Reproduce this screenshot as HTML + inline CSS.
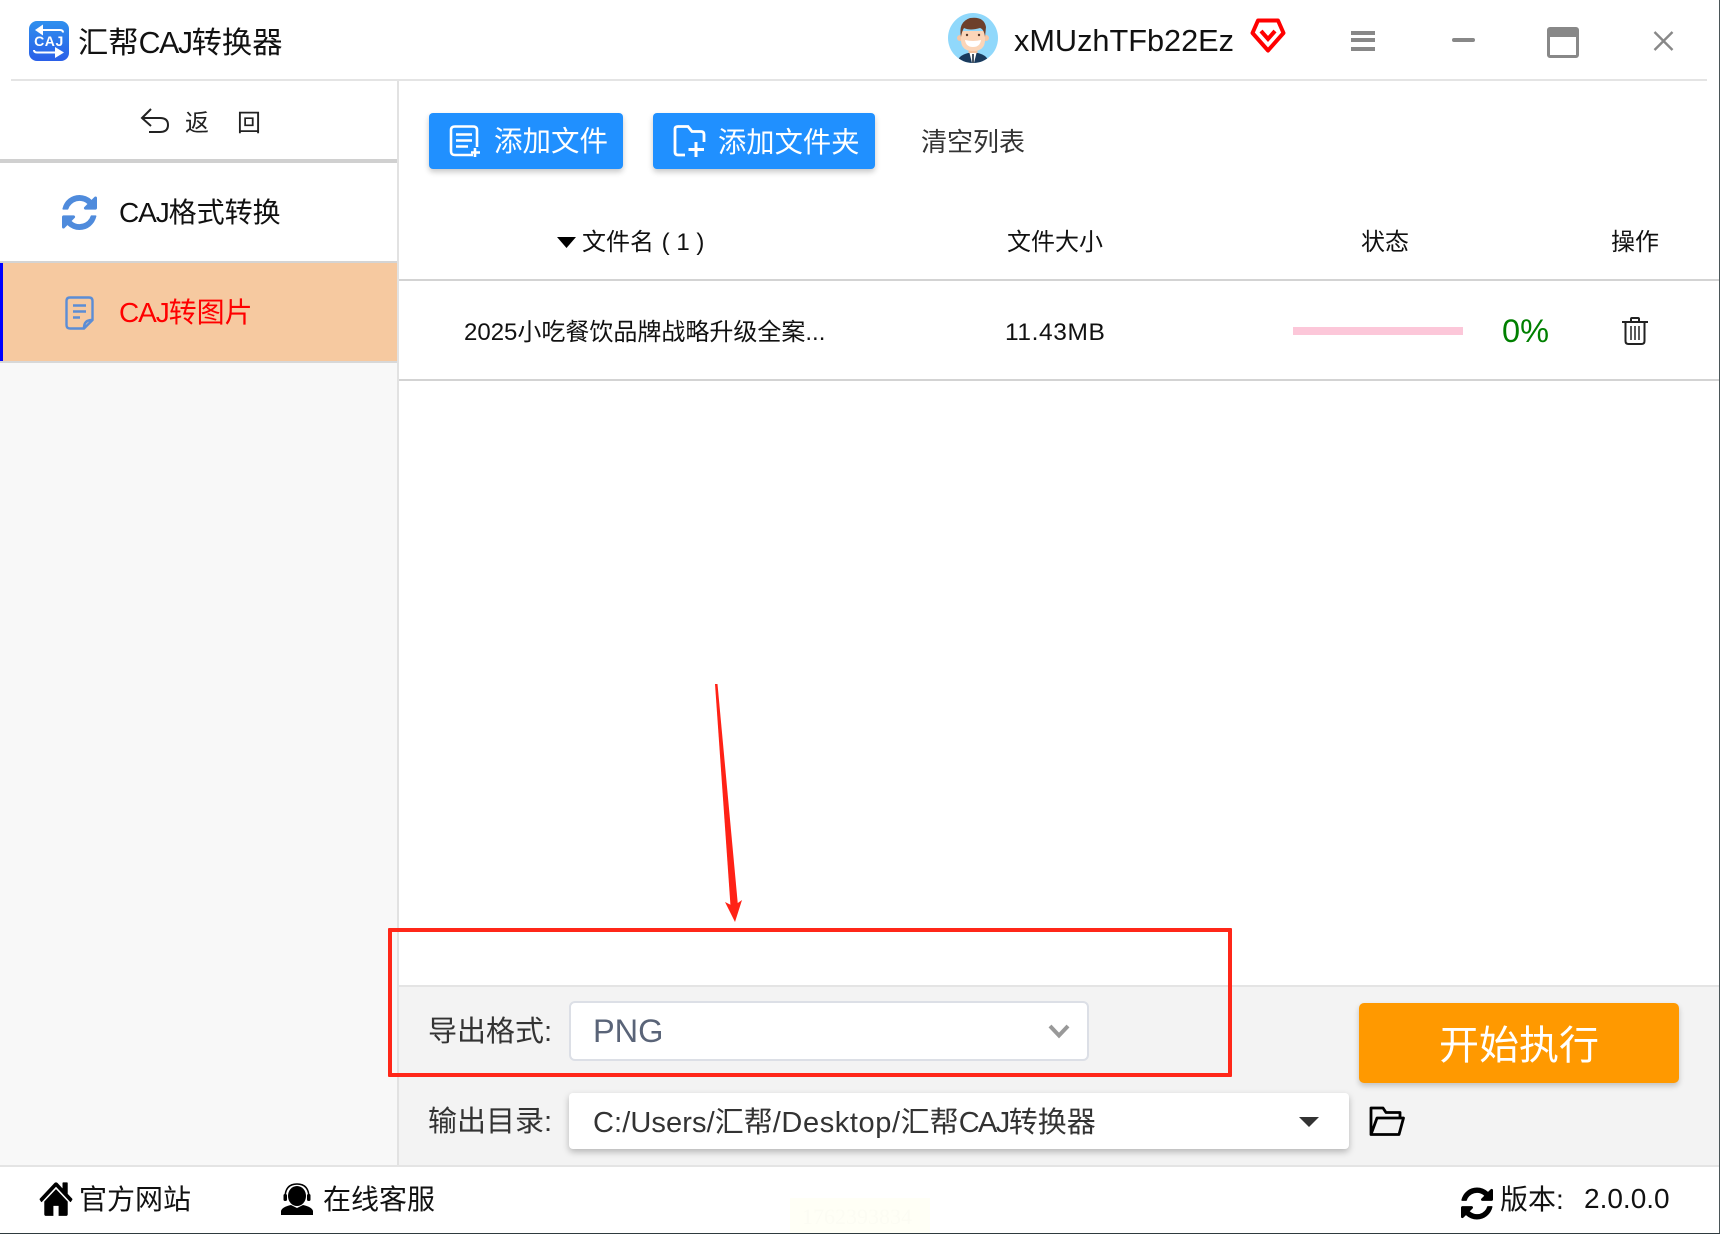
<!DOCTYPE html>
<html lang="zh-CN"><head><meta charset="utf-8"><title>汇帮CAJ转换器</title>
<style>
html,body{margin:0;padding:0;background:#fff}
#app{position:relative;width:1720px;height:1234px;overflow:hidden;background:#fff;font-family:"Liberation Sans","Noto Sans CJK SC",sans-serif;color:#111}
.b{position:absolute}
.t{position:absolute;white-space:nowrap;line-height:40px;height:40px}
svg{position:absolute;overflow:visible}
.n{letter-spacing:-1.1px}
</style></head><body><div id="app">

<!-- backgrounds -->
<div class="b" style="left:0;top:363px;width:397px;height:802px;background:#f8f8f8"></div>
<div class="b" style="left:399px;top:987px;width:1321px;height:178px;background:#f3f3f3"></div>
<div class="b" style="left:11px;top:79px;width:1696px;height:2px;background:#e4e4e4"></div>
<div class="b" style="left:397px;top:81px;width:2px;height:1084px;background:#e2e2e2"></div>
<div class="b" style="left:399px;top:985px;width:1321px;height:2px;background:#e4e4e4"></div>
<div class="b" style="left:0;top:1165px;width:1720px;height:2px;background:#e4e4e4"></div>
<div class="b" style="left:0;top:159px;width:397px;height:4px;background:#d0d0d0"></div>
<div class="b" style="left:0;top:261px;width:397px;height:2px;background:#d4d4d4"></div>
<div class="b" style="left:0;top:263px;width:397px;height:98px;background:#f6c9a0"></div>
<div class="b" style="left:0;top:263px;width:3px;height:98px;background:#0000ff"></div>
<div class="b" style="left:0;top:361px;width:397px;height:2px;background:#d8d8d8"></div>
<div class="b" style="left:399px;top:279px;width:1321px;height:2px;background:#d3d3d3"></div>
<div class="b" style="left:399px;top:379px;width:1321px;height:2px;background:#d3d3d3"></div>

<!-- title bar -->
<svg style="left:29px;top:21px" width="40" height="40" viewBox="0 0 40 40">
<defs><linearGradient id="lg" x1="0" y1="0" x2="0" y2="1"><stop offset="0" stop-color="#2f90ee"/><stop offset="1" stop-color="#2a5fe8"/></linearGradient></defs>
<rect width="40" height="40" rx="8" fill="url(#lg)"/>
<path d="M34 11.500 Q34 9 31 9 H13" fill="none" stroke="#fff" stroke-width="2"/><path d="M14 3.500 L6 9 L14 14.500Z" fill="#fff"/>
<path d="M5 29 Q5 31.500 8 31.500 H26" fill="none" stroke="#fff" stroke-width="2"/><path d="M26 26 L35 31.500 L26 37Z" fill="#fff"/>
<text x="20" y="25" text-anchor="middle" font-family="Liberation Sans" font-weight="700" font-size="14" fill="#fff" letter-spacing=".6">CAJ</text>
</svg>
<div class="t" style="left:78px;top:24px;font-size:30.300px">汇帮<span style="letter-spacing:-1.400px">CAJ</span>转换器</div>

<svg style="left:948px;top:13px" width="50" height="50" viewBox="0 0 50 50">
<defs><clipPath id="av"><circle cx="25" cy="25" r="25"/></clipPath></defs>
<g clip-path="url(#av)"><rect width="50" height="50" fill="#90d8fb"/>
<path d="M9 50 Q10 41 25 39 Q40 41 41 50Z" fill="#1a3a5c"/>
<path d="M21 38 H29 L26 50 H24Z" fill="#fff"/><path d="M24.200 41 H25.800 V50 H24.200Z" fill="#1a2a3c"/>
<rect x="20.500" y="31" width="9" height="9" fill="#f2c09c"/>
<circle cx="12" cy="25" r="3" fill="#f5c6a5"/><circle cx="38" cy="25" r="3" fill="#f5c6a5"/>
<path d="M13 18 H37 V27 Q37 38 25 38 Q13 38 13 27Z" fill="#fbd5b8"/>
<path d="M13 24 Q10 9 22 5 Q36 3 38 14 L37 24 Q36 16 32 15 Q22 18 16 15 Q14 18 13 24Z" fill="#6d3f2b"/>
<path d="M17 27 Q25 29 33 27 Q32 34 25 34 Q18 34 17 27Z" fill="#fff"/>
<circle cx="19" cy="22" r="1.200" fill="#5a3a2a"/><circle cx="31" cy="22" r="1.200" fill="#5a3a2a"/>
</g></svg>
<div class="t" style="left:1014px;top:21px;font-size:30.700px">xMUzhTFb22Ez</div>
<svg style="left:1250px;top:18px" width="36" height="36" viewBox="0 0 36 36">
<path d="M8 2.500 H28 L33.500 15 L18 32.500 L2.500 15Z" fill="none" stroke="#f00" stroke-width="4" stroke-linejoin="round"/>
<path d="M11 13 L18 21 L25 13" fill="none" stroke="#f00" stroke-width="4"/>
</svg>
<div class="b" style="left:1351px;top:31px;width:24px;height:4px;background:#888"></div>
<div class="b" style="left:1351px;top:38px;width:24px;height:4px;background:#888"></div>
<div class="b" style="left:1351px;top:47px;width:24px;height:4px;background:#888"></div>
<div class="b" style="left:1452px;top:38px;width:23px;height:4px;border-radius:2px;background:#888"></div>
<div class="b" style="left:1547px;top:27px;width:26px;height:18px;border:3px solid #888;border-top:10px solid #888;border-radius:3px"></div>
<svg style="left:1653px;top:31px" width="21" height="20" viewBox="0 0 21 20"><path d="M1.500 1 L19.500 19 M19.500 1 L1.500 19" stroke="#888" stroke-width="2.400" fill="none"/></svg>
<div class="b" style="left:1719px;top:0;width:1px;height:1234px;background:#4a5558"></div>

<!-- sidebar -->
<svg style="left:140px;top:108px" width="29" height="26" viewBox="0 0 29 26"><path d="M11 1 L2 10 L11 18" fill="none" stroke="#222" stroke-width="2"/><path d="M2 10 H20 Q28 10 28 17 Q28 24 20 24 H9" fill="none" stroke="#222" stroke-width="2"/></svg>
<div class="t" style="left:185px;top:104px;font-size:24px;color:#222">返</div>
<div class="t" style="left:237px;top:104px;font-size:24px;color:#222">回</div>

<svg style="left:62px;top:195px" width="35" height="35" viewBox="0 0 1536 1536"><path fill="#4f8bdc" d="M1511 928q0 5-1 7-64 268-268 434.500T764 1536q-146 0-282.500-55T238 1324l-129 129q-19 19-45 19t-45-19-19-45V960q0-26 19-45t45-19h448q26 0 45 19t19 45-19 45l-137 137q71 66 161 102t187 36q134 0 250-65t186-179q11-17 53-117 8-23 30-23h192q13 0 22.500 9.500t9.500 22.500zm25-800v448q0 26-19 45t-45 19h-448q-26 0-45-19t-19-45 19-45l138-138Q969 256 768 256q-134 0-250 65T332 500q-11 17-53 117-8 23-30 23H50q-13 0-22.500-9.500T18 608v-7q65-268 270-434.500T768 0q146 0 284 55.500T1297 212l130-129q19-19 45-19t45 19 19 45z"/></svg>
<div class="t" style="left:119px;top:193px;font-size:28px"><span class="n">CAJ</span>格式转换</div>

<svg style="left:65px;top:296px" width="29" height="34" viewBox="0 0 29 34"><path d="M5 1.500 H24 Q27.500 1.500 27.500 5 V24 L19 32.500 H5 Q1.500 32.500 1.500 29 V5 Q1.500 1.500 5 1.500Z" fill="none" stroke="#5b8dd6" stroke-width="2.400"/><path d="M19 32 Q19 24 27 24" fill="none" stroke="#5b8dd6" stroke-width="2.400"/><path d="M8 9.500 H21 M8 15.500 H21 M8 21.500 H15" stroke="#5b8dd6" stroke-width="2.400"/></svg>
<div class="t" style="left:119px;top:293px;font-size:28px;color:#f00"><span class="n">CAJ</span>转图片</div>

<!-- toolbar -->
<div class="b" style="left:429px;top:113px;width:194px;height:56px;background:#2090ff;border-radius:4px;box-shadow:0 3px 6px rgba(0,0,0,.22)"></div>
<svg style="left:449px;top:125px" width="32" height="33" viewBox="0 0 32 33"><path d="M24 30 H6 Q2 30 2 26 V5 Q2 1.500 6 1.500 H24 Q28 1.500 28 5 V22" fill="none" stroke="#fff" stroke-width="2.600"/><path d="M7 9.500 H23 M7 15.500 H23 M7 21.500 H19" stroke="#fff" stroke-width="2.600"/><path d="M26 23 V32 M22 27.500 H31" stroke="#fff" stroke-width="2.600"/></svg>
<div class="t" style="left:494px;top:122px;font-size:28.500px;color:#fff">添加文件</div>

<div class="b" style="left:653px;top:113px;width:222px;height:56px;background:#2090ff;border-radius:4px;box-shadow:0 3px 6px rgba(0,0,0,.22)"></div>
<svg style="left:673px;top:125px" width="33" height="33" viewBox="0 0 33 33"><path d="M12 30 H5 Q2 30 2 27 V4 Q2 1.500 5 1.500 H15 L19 6.500 H28 Q31 6.500 31 9.500 V17" fill="none" stroke="#fff" stroke-width="2.800"/><path d="M23 17 V32 M15.500 24.500 H31" stroke="#fff" stroke-width="3"/></svg>
<div class="t" style="left:718px;top:122px;font-size:28.300px;color:#fff">添加文件夹</div>
<div class="t" style="left:921px;top:122px;font-size:26px;color:#333">清空列表</div>

<!-- table -->
<svg style="left:557px;top:237px" width="19" height="11" viewBox="0 0 19 11"><path d="M0 0 H19 L9.500 11Z" fill="#000"/></svg>
<div class="t" style="left:582px;top:222.500px;font-size:24px">文件名 <span style="margin-left:1px">(</span> 1 )</div>
<div class="t" style="left:1007px;top:222.500px;font-size:24px">文件大小</div>
<div class="t" style="left:1361px;top:222.500px;font-size:24px">状态</div>
<div class="t" style="left:1611px;top:222.500px;font-size:24px">操作</div>
<div class="t" style="left:464px;top:313px;font-size:24px">2025小吃餐饮品牌战略升级全案...</div>
<div class="t" style="left:1005px;top:313px;font-size:24.500px;letter-spacing:.6px">11.43MB</div>
<div class="b" style="left:1293px;top:327px;width:170px;height:8px;background:#fcc7d9"></div>
<div class="t" style="left:1502px;top:311px;font-size:32.500px;color:#008000">0%</div>
<svg style="left:1621px;top:317px" width="28" height="28" viewBox="0 0 28 28"><path d="M1 5 H27 M10 5 V2 Q10 1 11 1 H17 Q18 1 18 2 V5" fill="none" stroke="#222" stroke-width="2"/><path d="M4.500 5 V24 Q4.500 27 7.500 27 H20.500 Q23.500 27 23.500 24 V5" fill="none" stroke="#222" stroke-width="2"/><path d="M10 9 V23 M14 9 V23 M18 9 V23" stroke="#222" stroke-width="1.500"/></svg>

<!-- arrow -->
<svg style="left:700px;top:670px" width="60" height="260" viewBox="0 0 60 260">
<path d="M15 14 L17.500 14 L38 236 L30.500 236Z" fill="#ff2216"/>
<path d="M25 232 L35 252 L42 230 L35 235 L31 235Z" fill="#ff2216"/>
</svg>

<!-- format -->
<div class="t" style="left:428px;top:1012px;font-size:29px;color:#333">导出格式:</div>
<div class="b" style="left:569px;top:1001px;width:516px;height:56px;background:#fff;border:2px solid #dcdfe6;border-radius:6px"></div>
<div class="t" style="left:593px;top:1011px;font-size:32.500px;color:#5a6478">PNG</div>
<svg style="left:1048px;top:1024px" width="22" height="14" viewBox="0 0 22 14"><path d="M2 2 L11 11.500 L20 2" fill="none" stroke="#999" stroke-width="4"/></svg>

<!-- dir -->
<div class="t" style="left:428px;top:1102px;font-size:29px;color:#333">输出目录:</div>
<div class="b" style="left:569px;top:1093px;width:780px;height:56px;background:#fff;border-radius:4px;box-shadow:0 3px 7px rgba(0,0,0,.25)"></div>
<div class="t" style="left:593px;top:1103px;font-size:29px;color:#333"><span style="letter-spacing:.1px">C:/Users/</span>汇帮<span style="letter-spacing:.6px">/Desktop/</span>汇帮<span style="letter-spacing:-1.600px">CAJ</span>转换器</div>
<svg style="left:1299px;top:1117px" width="20" height="10" viewBox="0 0 20 10"><path d="M0 0 H20 L10 10Z" fill="#333"/></svg>
<svg style="left:1369px;top:1106px" width="36" height="30" viewBox="0 0 36 30"><path d="M2 28.500 V2 H14 L17 6.500 H31 V12 M2 28.500 H30 L34.500 12 H8 L2 28.500Z" fill="none" stroke="#000" stroke-width="2.800" stroke-linejoin="round"/></svg>

<!-- start -->
<div class="b" style="left:1359px;top:1003px;width:320px;height:80px;background:#ff9900;border-radius:5px;box-shadow:0 3px 6px rgba(0,0,0,.2)"></div>
<div class="t" style="left:1439px;top:1026px;font-size:40px;color:#fff">开始执行</div>

<!-- footer -->
<svg style="left:39px;top:1182px" width="34" height="34" viewBox="60 240 1672 1300" preserveAspectRatio="none"><path fill="#000" d="M1472 992v480q0 26-19 45t-45 19h-384v-384H768v384H384q-26 0-45-19t-19-45V992q0-1 .5-3t.5-3l575-474 575 474q1 2 1 6zm223-69l-62 74q-8 9-21 11h-3q-13 0-21-7L896 424l-692 577q-12 8-24 7-13-2-21-11l-62-74q-8-10-7-23.500T101 878l719-599q32-26 76-26t76 26l244 204V288q0-14 9-23t23-9h192q14 0 23 9t9 23v408l219 182q10 8 11 21.500t-7 23.500z"/></svg>
<div class="t" style="left:79px;top:1180px;font-size:28px">官方网站</div>
<svg style="left:281px;top:1183px" width="32" height="32" viewBox="0 0 32 32"><path d="M4 15 Q4 1 16 1 Q28 1 28 15" fill="none" stroke="#000" stroke-width="1.500"/><rect x="2.500" y="11" width="3.500" height="7" rx="1.500" fill="#000"/><rect x="26" y="11" width="3.500" height="7" rx="1.500" fill="#000"/><ellipse cx="16" cy="13" rx="9" ry="10" fill="#000"/><path d="M0 32 V28 Q1 24 10 22 L16 25 L22 22 Q31 24 32 28 V32Z" fill="#000"/></svg>
<div class="t" style="left:323px;top:1180px;font-size:28px">在线客服</div>
<div class="b" style="left:790px;top:1198px;width:140px;height:35px;background:#fffff6"></div>
<div class="t" style="left:802px;top:1197px;font-size:22px;font-family:'Liberation Serif',serif;color:#fcfcf3">1762393834</div>
<svg style="left:1461px;top:1187px" width="32" height="33" viewBox="0 0 1536 1536"><path fill="#000" d="M1511 928q0 5-1 7-64 268-268 434.500T764 1536q-146 0-282.500-55T238 1324l-129 129q-19 19-45 19t-45-19-19-45V960q0-26 19-45t45-19h448q26 0 45 19t19 45-19 45l-137 137q71 66 161 102t187 36q134 0 250-65t186-179q11-17 53-117 8-23 30-23h192q13 0 22.500 9.500t9.500 22.500zm25-800v448q0 26-19 45t-45 19h-448q-26 0-45-19t-19-45 19-45l138-138Q969 256 768 256q-134 0-250 65T332 500q-11 17-53 117-8 23-30 23H50q-13 0-22.500-9.500T18 608v-7q65-268 270-434.500T768 0q146 0 284 55.500T1297 212l130-129q19-19 45-19t45 19 19 45z"/></svg>
<div class="t" style="left:1500px;top:1180px;font-size:28px">版本:</div>
<div class="t" style="left:1584px;top:1179px;font-size:28px">2.0.0.0</div>
<div class="b" style="left:0;top:1233px;width:1720px;height:1px;background:#2f3b3f"></div>

<!-- red rect -->
<div class="b" style="left:388px;top:928px;width:836px;height:141px;border:4px solid #ff2719;border-radius:1px"></div>
</div></body></html>
